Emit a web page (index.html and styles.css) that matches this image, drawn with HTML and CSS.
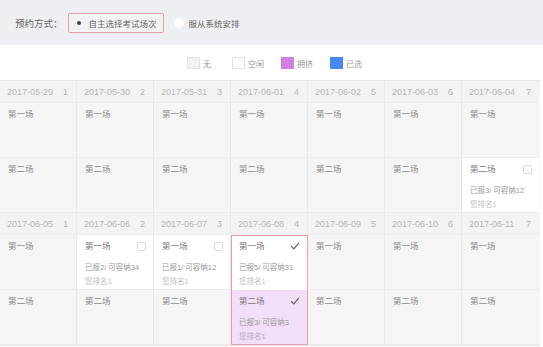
FILE: index.html
```html
<!DOCTYPE html>
<html>
<head>
<meta charset="utf-8">
<link rel="stylesheet" href="styles.css">
</head>
<body>
<div class="mode-bar">
  <span class="mode-label">预约方式：</span>
  <label class="radio-opt active"><span class="radio on"></span>自主选择考试场次</label>
  <label class="radio-opt"><span class="radio"></span>服从系统安排</label>
</div>
<div class="legend">
  <span class="legend-item w-none"><i class="sw sw-none"></i>无</span>
  <span class="legend-item"><i class="sw sw-free"></i>空闲</span>
  <span class="legend-item"><i class="sw sw-busy"></i>拥挤</span>
  <span class="legend-item"><i class="sw sw-sel"></i>已选</span>
</div>
<div class="calendar">
  <!-- week 1 -->
  <div class="hd"><span>2017-05-29</span><span>1</span></div>
  <div class="hd"><span>2017-05-30</span><span>2</span></div>
  <div class="hd"><span>2017-05-31</span><span>3</span></div>
  <div class="hd"><span>2017-06-01</span><span>4</span></div>
  <div class="hd"><span>2017-06-02</span><span>5</span></div>
  <div class="hd"><span>2017-06-03</span><span>6</span></div>
  <div class="hd"><span>2017-06-04</span><span>7</span></div>

  <div class="cell"><div class="title">第一场</div></div>
  <div class="cell"><div class="title">第一场</div></div>
  <div class="cell"><div class="title">第一场</div></div>
  <div class="cell"><div class="title">第一场</div></div>
  <div class="cell"><div class="title">第一场</div></div>
  <div class="cell"><div class="title">第一场</div></div>
  <div class="cell"><div class="title">第一场</div></div>

  <div class="cell"><div class="title">第二场</div></div>
  <div class="cell"><div class="title">第二场</div></div>
  <div class="cell"><div class="title">第二场</div></div>
  <div class="cell"><div class="title">第二场</div></div>
  <div class="cell"><div class="title">第二场</div></div>
  <div class="cell"><div class="title">第二场</div></div>
  <div class="cell free">
    <div class="title">第二场<span class="cb"></span></div>
    <div class="info">已报3/ 可容纳12</div>
    <div class="rank">您排名1</div>
  </div>

  <!-- week 2 -->
  <div class="hd"><span>2017-06-05</span><span>1</span></div>
  <div class="hd"><span>2017-06-06</span><span>2</span></div>
  <div class="hd"><span>2017-06-07</span><span>3</span></div>
  <div class="hd"><span>2017-06-08</span><span>4</span></div>
  <div class="hd"><span>2017-06-09</span><span>5</span></div>
  <div class="hd"><span>2017-06-10</span><span>6</span></div>
  <div class="hd"><span>2017-06-11</span><span>7</span></div>

  <div class="cell"><div class="title">第一场</div></div>
  <div class="cell free">
    <div class="title">第一场<span class="cb"></span></div>
    <div class="info">已报2/ 可容纳34</div>
    <div class="rank">您排名1</div>
  </div>
  <div class="cell free">
    <div class="title">第一场<span class="cb"></span></div>
    <div class="info">已报1/ 可容纳12</div>
    <div class="rank">您排名1</div>
  </div>
  <div class="cell free sel sel-top">
    <div class="title">第一场<span class="cb checked"><svg viewBox="0 0 10 10" width="10" height="10"><path d="M1.2 5.3 L3.9 7.9 L8.9 1.8" fill="none" stroke="#666" stroke-width="1.3"/></svg></span></div>
    <div class="info">已报5/ 可容纳31</div>
    <div class="rank">您排名1</div>
  </div>
  <div class="cell"><div class="title">第一场</div></div>
  <div class="cell"><div class="title">第一场</div></div>
  <div class="cell"><div class="title">第一场</div></div>

  <div class="cell"><div class="title">第二场</div></div>
  <div class="cell"><div class="title">第二场</div></div>
  <div class="cell"><div class="title">第二场</div></div>
  <div class="cell busy sel sel-bottom">
    <div class="title">第二场<span class="cb checked"><svg viewBox="0 0 10 10" width="10" height="10"><path d="M1.2 5.3 L3.9 7.9 L8.9 1.8" fill="none" stroke="#666" stroke-width="1.3"/></svg></span></div>
    <div class="info">已报3/ 可容纳3</div>
    <div class="rank">您排名1</div>
  </div>
  <div class="cell"><div class="title">第二场</div></div>
  <div class="cell"><div class="title">第二场</div></div>
  <div class="cell"><div class="title">第二场</div></div>
</div>
</body>
</html>
```

FILE: styles.css
```css
* { box-sizing: border-box; }
html, body { margin: 0; padding: 0; background: #fff; }
body {
  width: 543px;
  height: 347px;
  overflow: hidden;
  font-family: "Liberation Sans", "Noto Sans CJK SC", sans-serif;
  color: #666;
}

.mode-bar {
  height: 45px;
  background: #eeeff2;
  display: flex;
  align-items: center;
  padding-left: 15px;
  font-size: 8.5px;
  color: #666;
}
.mode-label {
  font-size: 9.5px;
  color: #666;
  margin-right: 5px;
}
.radio-opt {
  display: flex;
  align-items: center;
  height: 20px;
  padding: 0 6px 0 5px;
  border: 1px solid transparent;
  border-radius: 2px;
  margin-right: 4px;
}
.radio-opt.active {
  border-color: #e3a0a7;
  background: #f1f2f4;
}
.radio {
  width: 10px;
  height: 10px;
  border-radius: 50%;
  background: #fff;
  margin-right: 5px;
  position: relative;
}
.radio.on { background: transparent; }
.radio.on::after {
  content: "";
  position: absolute;
  left: 3px;
  top: 3px;
  width: 4px;
  height: 4px;
  border-radius: 50%;
  background: #444;
}

.legend {
  height: 35px;
  display: flex;
  align-items: center;
  padding-left: 187px;
  padding-top: 1px;
  font-size: 8px;
  color: #999;
}
.legend-item {
  display: flex;
  align-items: center;
  margin-right: 17px;
}
.legend-item.w-none { margin-right: 21px; }
.sw {
  display: inline-block;
  width: 13px;
  height: 12px;
  margin-right: 3px;
  border: 1px solid #e2e2e2;
}
.sw-none { background: #f1f1f1; }
.sw-free { background: #fff; }
.sw-busy { background: #d07edf; border-color: #d07edf; }
.sw-sel { background: #4a87f7; border-color: #4a87f7; }

.calendar {
  display: grid;
  grid-template-columns: repeat(7, 77px);
  grid-template-rows: 22px 55px 55px 22px 55px 55px;
  border-top: 1px solid #e6e6e6;
  border-bottom: 1px solid #e6e6e6;
  width: 540px;
  background: #f5f5f5;
}
.hd {
  display: flex;
  justify-content: space-between;
  align-items: center;
  padding: 0 8px 0 7px;
  font-size: 9px;
  color: #b5b5b5;
  background: #f3f3f3;
  border-right: 1px solid #e9e9e9;
  border-bottom: 1px solid #ececec;
}
.cell {
  padding: 5px 6px 0 8px;
  background: #f5f5f5;
  border-right: 1px solid #e9e9e9;
  border-bottom: 1px solid #ececec;
  font-size: 8.5px;
  color: #8a8a8a;
}
.hd:nth-child(7n), .cell:nth-child(7n) { border-right: none; }
.cell.free { background: #fff; color: #7a7a7a; }
.cell.busy { background: #f2def8; color: #7a7a7a; }
.cell.sel {
  border-left: 1px solid #e8a0a4;
  border-right: 1px solid #e8a0a4;
  padding-left: 7px;
}
.cell.sel-top { border-top: 1px solid #e8a0a4; border-bottom: none; padding-top: 4px; }
.cell.sel-bottom { border-bottom: 1px solid #e8a0a4; }

.title {
  display: flex;
  justify-content: space-between;
  align-items: center;
  height: 12px;
  line-height: 12px;
}
.cb {
  width: 9px;
  height: 9px;
  border: 1px solid #dadada;
  border-radius: 2px;
  background: #fff;
  display: flex;
  align-items: center;
  justify-content: center;
  margin-right: 1px;
}
.cb.checked { width: 10px; height: 10px; border: none; background: transparent; }
.cb svg { display: block; }
.info {
  margin-top: 10px;
  font-size: 7.5px;
  line-height: 11px;
  color: #999;
}
.rank {
  margin-top: 4px;
  font-size: 7.5px;
  line-height: 10px;
  color: #c0c0c0;
}
.busy .rank { color: #bda6c4; }
```
